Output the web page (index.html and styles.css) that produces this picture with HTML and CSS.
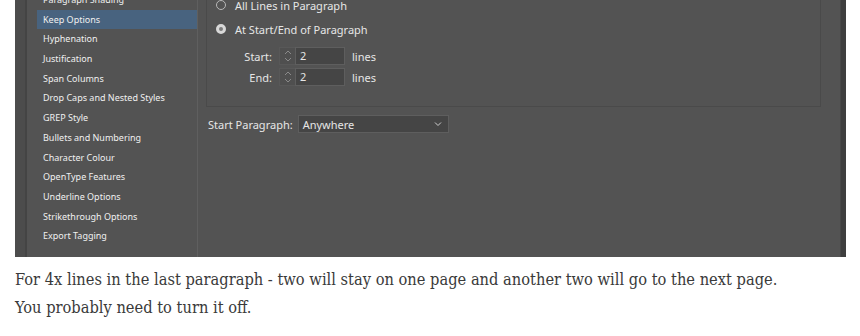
FILE: index.html
```html
<!DOCTYPE html>
<html lang="en">
<head>
    <meta charset="UTF-8">
    <title>Keep Options</title>
    <link rel="stylesheet" href="styles.css">
</head>
<body>

    <div class="shot">
        <div class="gutter"></div>
        <ul class="category-list">
            <li>Paragraph Shading</li>
            <li class="selected">Keep Options</li>
            <li>Hyphenation</li>
            <li>Justification</li>
            <li>Span Columns</li>
            <li>Drop Caps and Nested Styles</li>
            <li>GREP Style</li>
            <li>Bullets and Numbering</li>
            <li>Character Colour</li>
            <li>OpenType Features</li>
            <li>Underline Options</li>
            <li>Strikethrough Options</li>
            <li>Export Tagging</li>
        </ul>

        <div class="main">
            <div class="group">
                <label class="radio-row"><span class="radio"></span>All Lines in Paragraph</label>
                <label class="radio-row"><span class="radio checked"></span>At Start/End of Paragraph</label>

                <div class="lines-grid">
                    <span class="field-label">Start:</span>
                    <div class="spinner">
                        <span class="arrows">
                            <svg width="10" height="16" viewBox="0 0 10 16"><path d="M2 6 L5 3 L8 6" /><path d="M2 10 L5 13 L8 10" /></svg>
                        </span>
                        <span class="value">2</span>
                    </div>
                    <span class="unit">lines</span>

                    <span class="field-label">End:</span>
                    <div class="spinner">
                        <span class="arrows">
                            <svg width="10" height="16" viewBox="0 0 10 16"><path d="M2 6 L5 3 L8 6" /><path d="M2 10 L5 13 L8 10" /></svg>
                        </span>
                        <span class="value">2</span>
                    </div>
                    <span class="unit">lines</span>
                </div>
            </div>

            <div class="select-row">
                <span>Start Paragraph:</span>
                <div class="select">
                    <span>Anywhere</span>
                    <svg width="8" height="6" viewBox="0 0 8 6"><path d="M1 1.5 L4 4.5 L7 1.5" /></svg>
                </div>
            </div>
        </div>
        <div class="edge"></div>
    </div>

    <p class="caption">For 4x lines in the last paragraph - two will stay on one page and another two will go to the next page.<br>You probably need to turn it off.</p>

</body>
</html>
```

FILE: styles.css
```css
body {
    margin: 0;
    background-color: #fff;
}

.shot {
    display: flex;
    margin-left: 15px;
    width: 831px;
    height: 257px;
    overflow: hidden;
    background-color: #535353;
    font-family: "Noto Sans", sans-serif;
    color: #e6e6e6;
}

.gutter {
    width: 10px;
    background-color: #4c4c4c;
    border-right: 2px solid #444;
}

.category-list {
    list-style: none;
    margin: -10px 0 0 0;
    padding: 0 0 0 10px;
    width: 160px;
    border-right: 1px solid #5f5f5f;
    font-size: 9px;
    color: #f0f0f0;
}

.category-list li {
    height: 19.7px;
    line-height: 19.7px;
    padding-left: 6px;
    white-space: nowrap;
}

.category-list li.selected {
    background-color: #48637f;
}

.main {
    flex: 1;
    padding: 0 19px 0 8px;
    font-size: 11px;
}

.group {
    margin-top: -11px;
    padding: 4px 0 0 8px;
    border: 1px solid #4a4a4a;
    border-top: none;
    box-sizing: border-box;
    height: 118px;
}

.radio-row {
    display: flex;
    align-items: center;
    height: 24px;
    gap: 9px;
    padding-left: 1px;
}

.radio {
    width: 10px;
    height: 10px;
    border: 1px solid #b8b8b8;
    border-radius: 50%;
    box-sizing: border-box;
}

.radio.checked {
    border: 3px solid #d8d8d8;
    background-color: #7a7a7a;
}

.lines-grid {
    display: grid;
    grid-template-columns: 57px 66px auto;
    column-gap: 7px;
    row-gap: 3px;
    align-items: center;
    margin-top: 6px;
}

.field-label {
    text-align: right;
}

.spinner {
    display: flex;
    height: 18px;
}

.arrows {
    display: flex;
    align-items: center;
    justify-content: center;
    width: 15px;
    background-color: #4f4f4f;
    border: 1px solid #585858;
    border-right: none;
}

.arrows svg path {
    fill: none;
    stroke: #8a8a8a;
    stroke-width: 1;
}

.value {
    flex: 1;
    padding-left: 4px;
    line-height: 16px;
    background-color: #454545;
    border: 1px solid #5e5e5e;
}

.select-row {
    display: flex;
    align-items: center;
    gap: 5px;
    margin-top: 8px;
    padding-left: 2px;
}

.select {
    display: flex;
    align-items: center;
    justify-content: space-between;
    width: 151px;
    height: 18px;
    padding: 0 6px 0 4px;
    box-sizing: border-box;
    background-color: #454545;
    border: 1px solid #5e5e5e;
}

.select svg path {
    fill: none;
    stroke: #cfcfcf;
    stroke-width: 1;
}

.edge {
    width: 5px;
    background-color: #3e3e3e;
    border-left: 1px solid #484848;
}

.caption {
    margin: 9px 0 0 15px;
    font-family: "DejaVu Serif", serif;
    font-stretch: condensed;
    font-size: 16.3px;
    line-height: 28px;
    color: #3a3a3a;
}
```
